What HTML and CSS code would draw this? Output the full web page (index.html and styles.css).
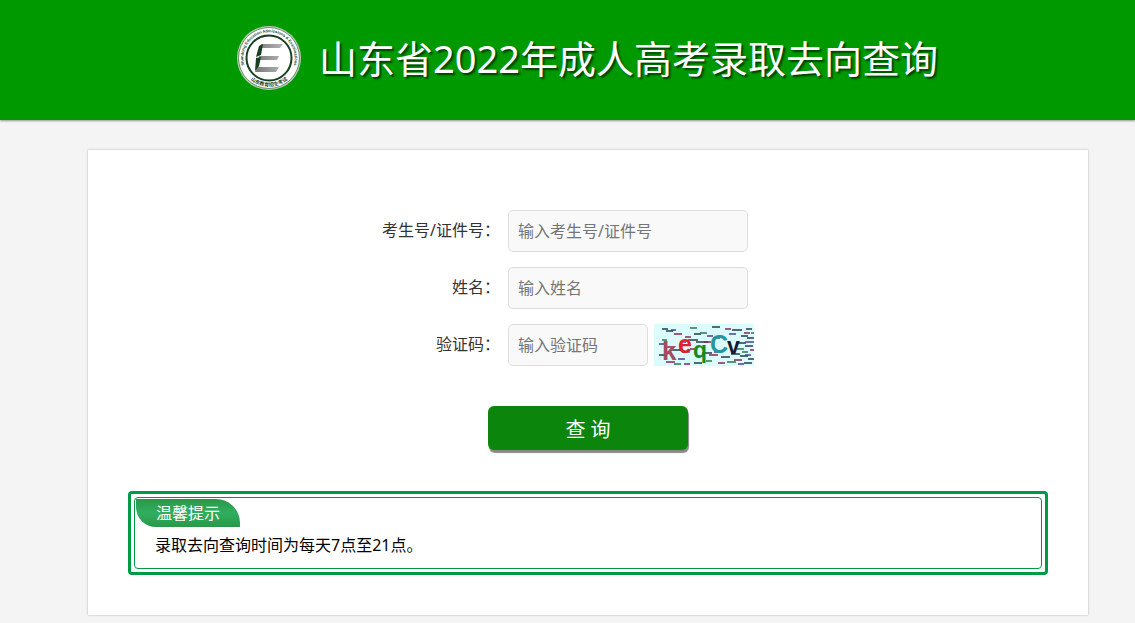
FILE: index.html
```html
<!DOCTYPE html>
<html lang="zh-CN">
<head>
    <meta charset="UTF-8">
    <meta name="viewport" content="width=device-width, initial-scale=1.0">
    <title>山东省2022年成人高考录取去向查询</title>
    <link rel="stylesheet" href="styles.css">
</head>
<body>

    <header class="header">
        <svg class="logo" viewBox="0 0 64 64" aria-hidden="true">
            <defs>
                <path id="ring-top" d="M9.200 43.800 A25.700 25.700 0 1 1 54.800 43.800"/>
                <path id="ring-bottom" d="M7 46 A28.800 28.800 0 0 0 57 46"/>
                <linearGradient id="bar" x1="0" x2="1" y1="0" y2="0">
                    <stop offset="0" stop-color="#777"/>
                    <stop offset="1" stop-color="#b5b5b5"/>
                </linearGradient>
            </defs>
            <circle cx="32" cy="32" r="32" fill="#b9d3b9"/>
            <circle cx="32" cy="32" r="30.500" fill="#fff" stroke="#6d8a6f" stroke-width="1"/>
            <circle cx="32" cy="32" r="22.500" fill="#fff" stroke="#173f20" stroke-width="2"/>
            <text class="ring-text"><textPath href="#ring-top" startOffset="50%">Shandong Education Admissions &amp; Examinations</textPath></text>
            <text class="ring-text-cn"><textPath href="#ring-bottom" startOffset="50%">山东教育招生考试</textPath></text>
            <path fill="url(#bar)" d="M24 18h22l-3 4H23zM22 30h20l-2 4H22zM20 41h22l-3 5H18z"/>
            <path fill="#173f20" d="M22 20l4-2-2 11-5 2zM19 32l5-1-2 9-4 5z"/>
        </svg>
        <h1 class="title">山东省2022年成人高考录取去向查询</h1>
    </header>

    <main class="main">
        <div class="card">
            <form class="query-form" action="#" method="post">
                <div class="form-row">
                    <label for="number">考生号/证件号：</label>
                    <input type="text" id="number" name="number" placeholder="输入考生号/证件号">
                </div>
                <div class="form-row">
                    <label for="name">姓名：</label>
                    <input type="text" id="name" name="name" placeholder="输入姓名">
                </div>
                <div class="form-row">
                    <label for="code">验证码：</label>
                    <div class="code-group">
                        <input type="text" id="code" class="code" name="code" placeholder="输入验证码">
                        <svg class="captcha" viewBox="0 0 100 42" role="img" aria-label="验证码">
                            <rect width="100" height="42" fill="#dcfbfc"/>
                            <g fill="none" stroke-width="1.500">
                                <path stroke="#213d45" d="M8 5h6M12 7h7M40 10h7M34 16h10M42 18h12M58 3h8M78 6h10M92 5h6M87 12h7M93 14h7M82 19h10M91 22h8M77 30h9M86 32h8M94 35h6M18 26h9M5 31h8M48 29h10M67 33h9M40 39h8M90 39h8"/>
                                <path stroke="#287a4a" d="M36 4h7M46 9h7M59 14h7M8 16h5M28 28h8M83 25h7M73 38h9M20 40h7M52 37h6M88 28h6M97 9h3"/>
                                <path stroke="#8b2554" d="M20 10h8M31 13h6M50 18h7M71 5h6M90 9h6M11 23h7M36 25h6M55 31h9M80 36h8M12 38h9M30 40h6M64 39h7M96 26h4"/>
                                <path stroke="#4c3f94" d="M17 6h5M26 18h6M53 12h6M75 10h7M91 18h9M5 20h5M43 32h8M60 28h6M84 40h6M91 31h6M24 35h7"/>
                            </g>
                            <text class="captcha-char bold" x="8" y="36" fill="#a64a5d" font-size="26">k</text>
                            <text class="captcha-char bold" x="24" y="29" fill="#e51c2b" font-size="25">e</text>
                            <text class="captcha-char bold" x="39" y="34" fill="#158a25" font-size="23">q</text>
                            <text class="captcha-char bold" x="56" y="29" fill="#2396a0" font-size="25">C</text>
                            <text class="captcha-char bold" x="73" y="30" fill="#19192e" font-size="23">v</text>
                        </svg>
                    </div>
                </div>
                <button type="submit" class="submit">查 询</button>
            </form>

            <section class="tips">
                <div class="tips-inner">
                    <h2 class="tips-title">温馨提示</h2>
                    <p class="tips-text">录取去向查询时间为每天7点至21点。</p>
                </div>
            </section>
        </div>
    </main>

</body>
</html>
```
FILE: styles.css
```css
* {
    box-sizing: border-box;
}

body {
    margin: 0;
    background-color: #f4f4f4;
    color: #333;
    font-family: "Noto Sans", "Noto Sans CJK SC", sans-serif;
    font-size: 16px;
}

/* Page header */
.header {
    display: flex;
    justify-content: center;
    align-items: center;
    gap: 18px;
    height: 120px;
    padding: 0 0 4px 40px;
    background-color: #090;
    box-shadow: 0 1px 2px rgba(0, 0, 0, 0.4);
}

.logo {
    flex: none;
    width: 64px;
    height: 64px;
}

.ring-text {
    font-family: "Liberation Sans", sans-serif;
    font-size: 4px;
    font-weight: bold;
    fill: #24482a;
    text-anchor: middle;
}

.ring-text-cn {
    font-size: 5px;
    font-weight: bold;
    fill: #24482a;
    text-anchor: middle;
}

.title {
    margin: 0;
    color: #fff;
    font-size: 38px;
    font-weight: normal;
    line-height: 56px;
    white-space: nowrap;
    text-shadow: 2px 2px 2px rgba(0, 0, 0, 0.6);
}

/* White content card */
.main {
    padding: 30px 0 8px 41px;
}

.card {
    max-width: 1000px;
    margin: 0 auto;
    padding: 60px 40px 40px;
    background-color: #fff;
    box-shadow: 0 0 2px rgba(0, 0, 0, 0.3);
}

/* Query form */
.query-form {
    display: flex;
    flex-direction: column;
    gap: 15px;
}

.form-row {
    display: grid;
    grid-template-columns: calc(50% - 88px) 1fr;
    gap: 8px;
}

.form-row label {
    line-height: 40px;
    text-align: right;
}

.form-row input {
    width: 240px;
    height: 42px;
    padding: 0 9px;
    border: 1px solid #ddd;
    border-radius: 5px;
    background-color: #f9f9f9;
    font-family: inherit;
    font-size: 16px;
}

.form-row input::placeholder {
    color: #757575;
}

.form-row .code {
    width: 140px;
}

.code-group {
    display: flex;
    gap: 6px;
}

.captcha {
    width: 100px;
    height: 42px;
}

.captcha-char {
    font-family: "Liberation Sans", sans-serif;
}

.captcha-char.bold {
    font-weight: bold;
}

.submit {
    align-self: center;
    width: 200px;
    height: 44px;
    margin-top: 25px;
    padding: 0;
    border: none;
    border-radius: 6px;
    background-color: #0c850c;
    box-shadow: 1px 3px 1px #888;
    color: #fff;
    font-family: inherit;
    font-size: 20px;
    cursor: pointer;
}

/* Tips box with double frame */
.tips {
    margin-top: 41px;
    padding: 3px;
    border: 3px solid #094;
    border-radius: 4px;
}

.tips-inner {
    padding: 1px 1px 10px;
    border: 1px solid #094;
    border-radius: 4px;
}

.tips-title {
    width: 104px;
    margin: 0;
    border-radius: 0 24px 0 20px;
    background: linear-gradient(#2a9848, #30ae60 50%, #2a9848);
    color: #fff;
    font-size: 16px;
    font-weight: normal;
    line-height: 28px;
    text-align: center;
}

.tips-text {
    margin: 6px 19px 0;
    color: #000;
    line-height: 25px;
}
```
